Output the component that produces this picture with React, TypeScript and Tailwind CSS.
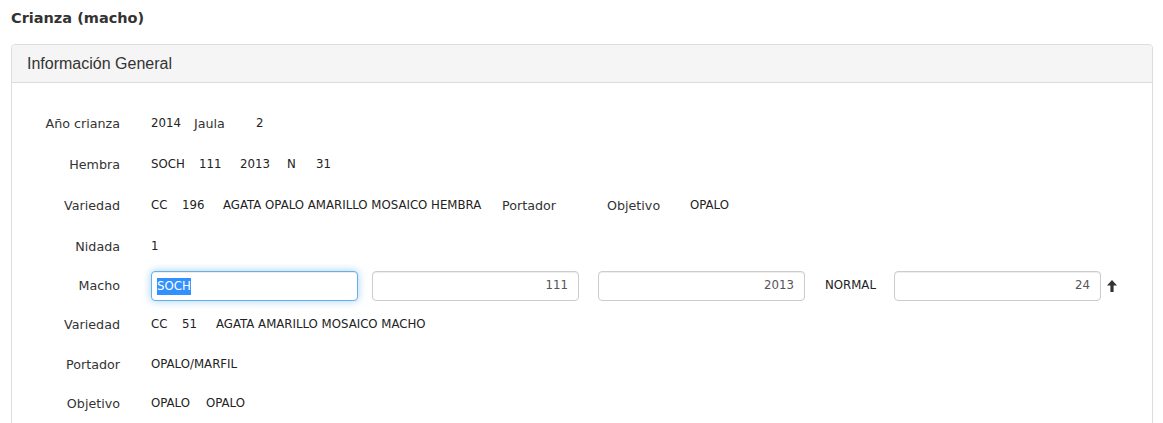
import React from 'react';

const label = "text-[12.7px] text-[#333] font-['DejaVu_Sans',sans-serif]";
const val = "text-[11.75px] text-[#222] font-['DejaVu_Sans',sans-serif]";

function Row({ name, h, children }: { name: string; h: string; children?: React.ReactNode }) {
  return (
    <div className={`flex items-center ${h}`}>
      <div className={`w-[108px] shrink-0 text-right ${label}`}>{name}</div>
      <div className="ml-[31px] flex items-center">{children}</div>
    </div>
  );
}

function Box({ value, w }: { value: string; w: string }) {
  return (
    <div className={`${w} h-[30px] rounded-[4px] border border-[#ccc] bg-white flex items-center justify-end px-[10px] ${val} text-[#555] shadow-[inset_0_1px_1px_rgba(0,0,0,0.075)]`}>
      {value}
    </div>
  );
}

export default function App() {
  return (
    <div className="bg-white w-[1163px] h-[423px] overflow-hidden px-[11px] pt-[8px]">
      <h3 className="text-[14.5px] font-bold text-[#333] font-['DejaVu_Sans',sans-serif] leading-[20px]">Crianza (macho)</h3>
      <div className="mt-[16px] w-[1142px] border border-[#ddd] rounded-[4px]">
        <div className="h-[38px] bg-[#f5f5f5] border-b border-[#ddd] rounded-t-[4px] flex items-center px-[15px]">
          <span className="text-[16px] text-[#333] font-['Liberation_Sans',Arial,sans-serif]">Información General</span>
        </div>
        <div className="pt-[20.5px] pb-[20px]">
          <Row name="Año crianza" h="h-[41px]">
            <span className={`${val} w-[43px]`}>2014</span>
            <span className={`${label} w-[62px]`}>Jaula</span>
            <span className={val}>2</span>
          </Row>
          <Row name="Hembra" h="h-[41px]">
            <span className={`${val} w-[48px]`}>SOCH</span>
            <span className={`${val} w-[41px]`}>111</span>
            <span className={`${val} w-[47px]`}>2013</span>
            <span className={`${val} w-[29px]`}>N</span>
            <span className={val}>31</span>
          </Row>
          <Row name="Variedad" h="h-[41px]">
            <span className={`${val} w-[31px]`}>CC</span>
            <span className={`${val} w-[41px]`}>196</span>
            <span className={`${val} w-[279px]`}>AGATA OPALO AMARILLO MOSAICO HEMBRA</span>
            <span className={`${label} w-[105px]`}>Portador</span>
            <span className={`${label} w-[83px]`}>Objetivo</span>
            <span className={val}>OPALO</span>
          </Row>
          <Row name="Nidada" h="h-[41px]">
            <span className={val}>1</span>
          </Row>
          <Row name="Macho" h="h-[37px]">
            <div className="w-[207px] h-[30px] rounded-[4px] border border-[#66afe9] bg-white flex items-center px-[5px] shadow-[inset_0_1px_1px_rgba(0,0,0,0.075),0_0_8px_rgba(102,175,233,0.6)]">
              <span className={`${val} bg-[#3390ff] text-white leading-[17px]`}>SOCH</span>
            </div>
            <div className="ml-[14px]"><Box value="111" w="w-[207px]" /></div>
            <div className="ml-[19px]"><Box value="2013" w="w-[207px]" /></div>
            <span className={`${val} ml-[20px] w-[69px]`}>NORMAL</span>
            <Box value="24" w="w-[207px]" />
            <svg className="ml-[6px]" width="10" height="12" viewBox="0 0 10 12">
              <path d="M5 0 L10 5.5 H6.6 V12 H3.4 V5.5 H0 Z" fill="#333" />
            </svg>
          </Row>
          <Row name="Variedad" h="h-[41px]">
            <span className={`${val} w-[31px]`}>CC</span>
            <span className={`${val} w-[34px]`}>51</span>
            <span className={val}>AGATA AMARILLO MOSAICO MACHO</span>
          </Row>
          <Row name="Portador" h="h-[39px]">
            <span className={val}>OPALO/MARFIL</span>
          </Row>
          <Row name="Objetivo" h="h-[39px]">
            <span className={`${val} w-[55px]`}>OPALO</span>
            <span className={val}>OPALO</span>
          </Row>
        </div>
      </div>
    </div>
  );
}
